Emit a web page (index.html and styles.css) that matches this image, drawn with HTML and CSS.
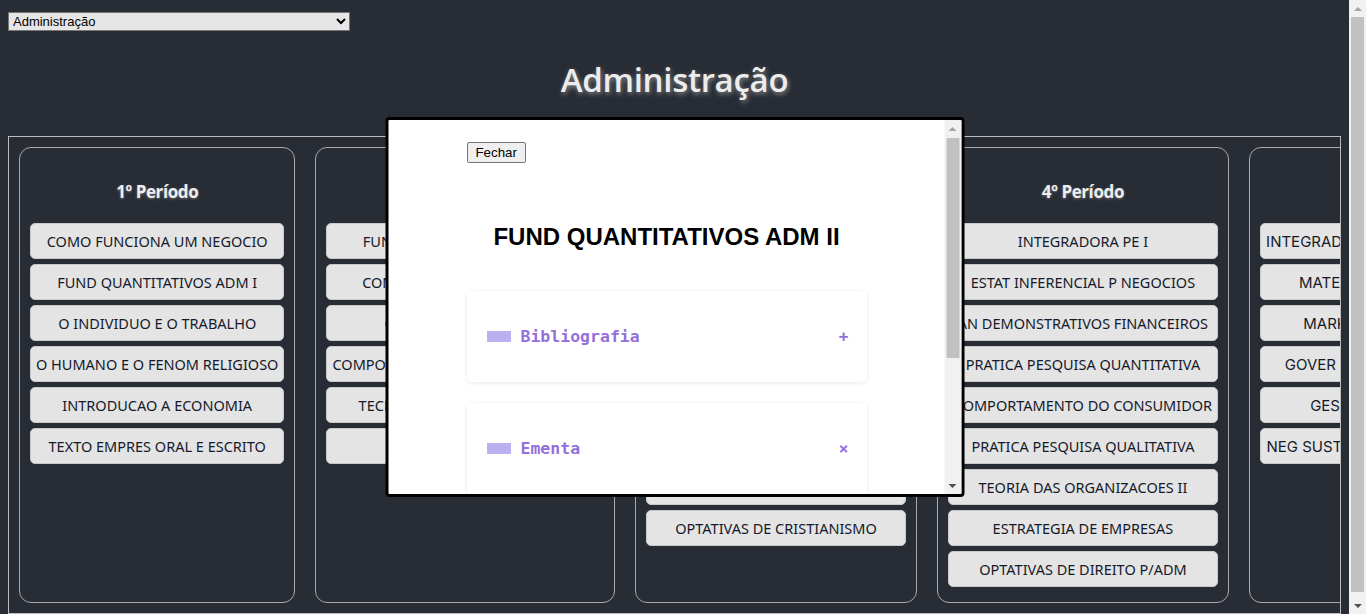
FILE: index.html
```html
<!DOCTYPE html>
<html lang="pt-BR">
<head>
<meta charset="utf-8">
<title>Administração</title>
<link rel="stylesheet" href="styles.css">
</head>
<body>
<div class="picker">
  <select class="course-select">
    <option>Administração</option>
    <option>Ciências Contábeis</option>
    <option>Economia</option>
  </select>
</div>
<h1 class="course-title">Administração</h1>

<div class="board">
  <section class="period">
    <h3 class="period-title">1º Período</h3>
    <button class="subject">COMO FUNCIONA UM NEGOCIO</button>
    <button class="subject">FUND QUANTITATIVOS ADM I</button>
    <button class="subject">O INDIVIDUO E O TRABALHO</button>
    <button class="subject">O HUMANO E O FENOM RELIGIOSO</button>
    <button class="subject">INTRODUCAO A ECONOMIA</button>
    <button class="subject">TEXTO EMPRES ORAL E ESCRITO</button>
  </section>
  <section class="period">
    <h3 class="period-title">2º Período</h3>
    <button class="subject">FUND QUANTITATIVOS ADM II</button>
    <button class="subject">COMUNICACAO EMPRESARIAL</button>
    <button class="subject">GESTAO DE PROCESSOS</button>
    <button class="subject">COMPORTAMENTO ORGANIZACIONAIS</button>
    <button class="subject">TECNOLOGIA DA INFORMACAO</button>
    <button class="subject">CULTURA E CIDADANIA</button>
  </section>
  <section class="period">
    <h3 class="period-title">3º Período</h3>
    <button class="subject">ESTATISTICA DESCRITIVA</button>
    <button class="subject">CONTABILIDADE GERENCIAL</button>
    <button class="subject">MATEMATICA FINANCEIRA</button>
    <button class="subject">TEORIA DAS ORGANIZACOES I</button>
    <button class="subject">DIREITO EMPRESARIAL</button>
    <button class="subject">GESTAO DE OPERACOES</button>
    <button class="subject">ETICA E RESPONSABILIDADE SOCIAL</button>
    <button class="subject">OPTATIVAS DE CRISTIANISMO</button>
  </section>
  <section class="period">
    <h3 class="period-title">4º Período</h3>
    <button class="subject">INTEGRADORA PE I</button>
    <button class="subject">ESTAT INFERENCIAL P NEGOCIOS</button>
    <button class="subject">AN DEMONSTRATIVOS FINANCEIROS</button>
    <button class="subject">PRATICA PESQUISA QUANTITATIVA</button>
    <button class="subject">COMPORTAMENTO DO CONSUMIDOR</button>
    <button class="subject">PRATICA PESQUISA QUALITATIVA</button>
    <button class="subject">TEORIA DAS ORGANIZACOES II</button>
    <button class="subject">ESTRATEGIA DE EMPRESAS</button>
    <button class="subject">OPTATIVAS DE DIREITO P/ADM</button>
  </section>
  <section class="period period-alt">
    <h3 class="period-title">5º Período</h3>
    <button class="subject">INTEGRADORA PROJ EMPRESARIAL II</button>
    <button class="subject">MATEMATICA FINANCEIRA II</button>
    <button class="subject">MARKETING ESTRATEGICO</button>
    <button class="subject">GOVER CORPORATIVA E RISCOS</button>
    <button class="subject">GESTAO DE PROJETOS III</button>
    <button class="subject">NEG SUST E RESPONSABILID SOCIAL</button>
  </section>
</div>

<div class="page-bar" aria-hidden="true">
  <span class="arrow arrow-up"></span>
  <div class="track"><div class="thumb page-thumb"></div></div>
  <span class="arrow arrow-down"></span>
</div>

<div class="modal">
  <div class="modal-scroll">
    <div class="modal-inner">
      <button class="close-btn">Fechar</button>
      <h2 class="modal-title">FUND QUANTITATIVOS ADM II</h2>
      <div class="acc-card">
        <div class="acc-head">
          <span class="acc-mark"></span>
          <span class="acc-label">Bibliografia</span>
          <span class="acc-sign">+</span>
        </div>
      </div>
      <div class="acc-card">
        <div class="acc-head">
          <span class="acc-mark"></span>
          <span class="acc-label">Ementa</span>
          <span class="acc-sign">×</span>
        </div>
        <div class="acc-body">
          <p>Funções de uma variável real. Limites e continuidade. Derivadas e aplicações: custo, receita e lucro marginal. Otimização e noções de integral.</p>
        </div>
      </div>
    </div>
  </div>
  <div class="modal-bar" aria-hidden="true">
    <span class="arrow arrow-up"></span>
    <div class="track"><div class="thumb modal-thumb"></div></div>
    <span class="arrow arrow-down"></span>
  </div>
</div>
</body>
</html>
```

FILE: styles.css
```css
html, body {
  background: #282c34;
  scrollbar-width: none;
}
body {
  margin: 8px 25px 8px 8px;
  font-family: "Noto Sans", "Open Sans", sans-serif;
  color: #e8e8e8;
}
.picker {
  padding-top: 4px;
}
.course-select {
  width: 342px;
  height: 19px;
  font-family: "Liberation Sans", Arial, sans-serif;
  font-size: 13px;
  background: #e6e6e6;
  color: #000;
  border: 1px solid #767676;
  border-radius: 0;
  padding: 0;
  display: block;
}
.course-title {
  margin: 29px 0 36px;
  text-align: center;
  font-family: "Open Sans", sans-serif;
  font-weight: 600;
  font-size: 33px;
  line-height: 40px;
  color: #ececec;
  text-shadow: 1px 2px 5px rgba(255, 255, 255, 0.45);
  letter-spacing: -0.3px;
}
.board {
  display: flex;
  align-items: stretch;
  gap: 20px;
  padding: 10px;
  border: 1px solid #bdbdbd;
  overflow: hidden;
}
.period {
  flex: 0 0 auto;
  display: flex;
  flex-direction: column;
  border: 1px solid #a9a9a9;
  border-radius: 12px;
  padding: 10px 10px 10px;
}
.period-title {
  margin: 22px 0 19px;
  text-align: center;
  font-family: "Open Sans", sans-serif;
  font-weight: 700;
  font-size: 17px;
  line-height: 24px;
  color: #eeeeee;
  letter-spacing: -0.4px;
  text-shadow: 0 1px 3px rgba(255, 255, 255, 0.3);
}
.subject {
  display: block;
  width: 100%;
  height: 36px;
  margin: 0 0 5px;
  padding: 0 5px;
  white-space: nowrap;
  font-family: "Noto Sans", sans-serif;
  font-size: 14.5px;
  color: #151a2b;
  background: #e4e4e4;
  border: 1px solid #c9c9c9;
  border-radius: 5px;
  text-align: center;
}
.period-alt .subject {
  font-family: "Inter", sans-serif;
  font-size: 15px;
}

/* fake classic scrollbars */
.page-bar {
  position: fixed;
  top: 0;
  right: 0;
  width: 17px;
  height: 100vh;
  background: #f1f1f1;
  display: flex;
  flex-direction: column;
}
.arrow {
  flex: 0 0 17px;
  display: flex;
  align-items: center;
  justify-content: center;
}
.arrow::before {
  content: "";
  width: 0;
  height: 0;
  border-left: 4px solid transparent;
  border-right: 4px solid transparent;
}
.arrow-up::before {
  border-bottom: 4px solid #a3a3a3;
}
.arrow-down::before {
  border-top: 4px solid #505050;
}
.track {
  flex: 1;
  display: flex;
  flex-direction: column;
  padding: 0 2px;
}
.thumb {
  background: #c1c1c1;
}
.page-thumb {
  flex: 0 0 575px;
}
.modal-thumb {
  margin-top: 1px;
  flex: 0 0 220px;
}

.modal {
  position: fixed;
  left: calc(50% - 8.5px);
  top: 50%;
  transform: translate(-50%, -50%);
  width: 579px;
  height: 380px;
  box-sizing: border-box;
  border: 3px solid #000;
  border-radius: 4px;
  background: #fff;
  display: flex;
  overflow: hidden;
}
.modal-scroll {
  flex: 1;
  overflow-y: auto;
  scrollbar-width: none;
}
.modal-bar {
  flex: 0 0 17px;
  display: flex;
  flex-direction: column;
  background: #f1f1f1;
}
.modal-inner {
  width: 400px;
  margin: 0 auto;
  padding: 20px 0 20px;
}
.close-btn {
  font-family: "Liberation Sans", Arial, sans-serif;
  font-size: 13.3px;
  height: 21px;
  padding: 1px 8px;
  color: #000;
  background: #efefef;
  border: 1px solid #767676;
  border-radius: 2px;
}
.modal-title {
  margin: 60px 0 40px;
  text-align: center;
  font-family: "Liberation Sans", Arial, sans-serif;
  font-weight: 700;
  font-size: 24px;
  line-height: 28px;
  color: #000;
}
.acc-card {
  background: #fff;
  border-radius: 5px;
  box-shadow: 0 1px 5px rgba(0, 0, 0, 0.09);
  margin-bottom: 21px;
}
.acc-head {
  display: flex;
  align-items: center;
  height: 91px;
  padding: 0 18px 0 20px;
  box-sizing: border-box;
}
.acc-mark {
  width: 24px;
  height: 11px;
  background: #bbb0f0;
  margin-right: 10px;
}
.acc-label {
  flex: 1;
  font-family: "DejaVu Sans Mono", "Liberation Mono", monospace;
  font-weight: 700;
  font-size: 16.5px;
  color: #9370db;
}
.acc-sign {
  font-family: "DejaVu Sans Mono", monospace;
  font-weight: 700;
  font-size: 16px;
  color: #9370db;
}
.acc-body {
  padding: 0 20px 40px;
  font-family: "DejaVu Sans Mono", monospace;
  font-size: 14px;
  color: #555;
}
.acc-body p {
  margin: 0;
  line-height: 22px;
}
```
